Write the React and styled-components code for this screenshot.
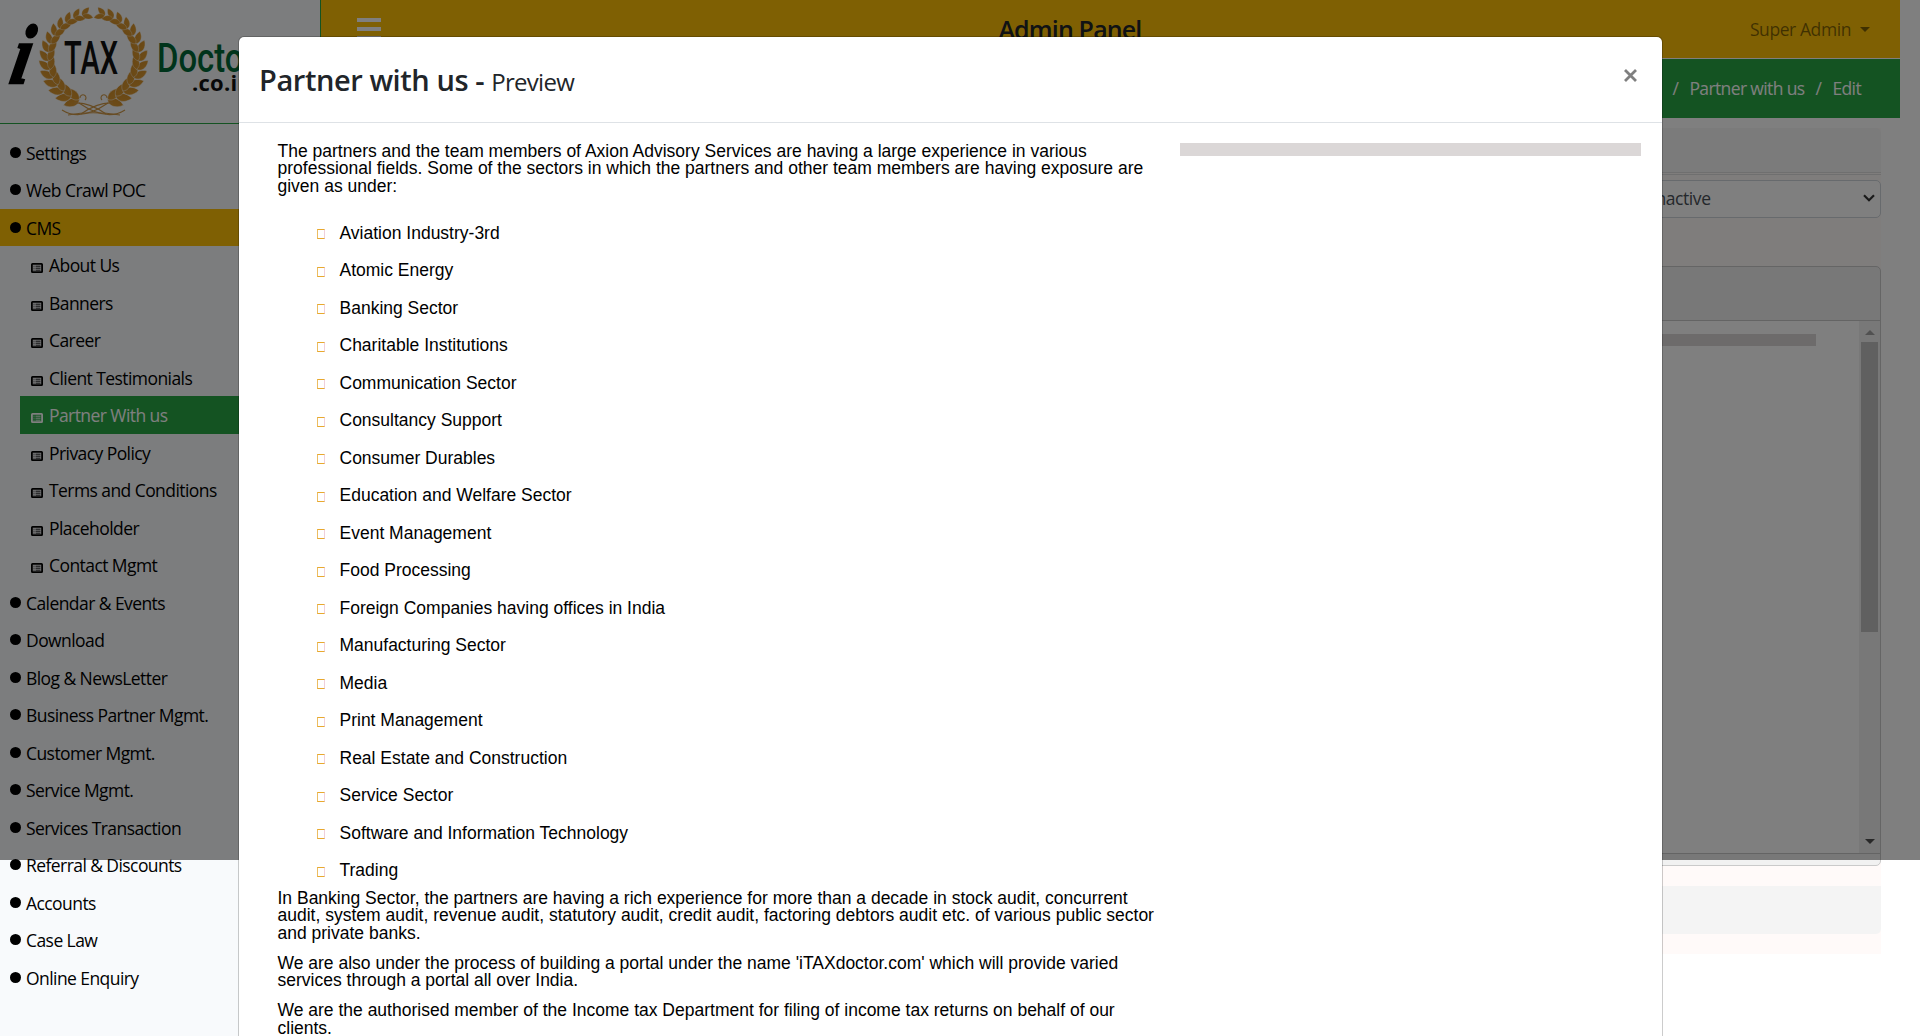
import React from "react";
import styled, { createGlobalStyle } from "styled-components";

const ui = `"Open Sans", "Noto Sans", sans-serif`;

const GlobalStyle = createGlobalStyle`
  *, *::before, *::after { box-sizing: border-box; }
  body { margin: 0; background: #fff; font-family: ${ui}; overflow: hidden; }
  p, ul, h1, h2 { margin: 0; padding: 0; }
`;

const Page = styled.div`
  position: relative;
  display: flex;
  width: 1920px;
  height: 1036px;
  overflow: hidden;
`;

/* ---------- sidebar ---------- */
const Sidebar = styled.aside`
  flex: none;
  width: 321px;
  background: #f8fafc;
  border-right: 1px solid #28a745;
`;

const Brand = styled.div`
  height: 124px;
  border-bottom: 1px solid #28a745;
  svg { display: block; }
`;

const Menu = styled.ul`
  list-style: none;
  padding-top: 9.75px;
`;

const MenuItem = styled.li`
  display: flex;
  align-items: center;
  height: 37.5px;
  padding: 0 0 0 10px;
  gap: 5px;
  font-size: 17.5px;
  letter-spacing: -0.57px;
  white-space: nowrap;
  color: #000;
  background: ${(p) => (p.$active ? "#ffc107" : "transparent")};
`;

const Dot = styled.span`
  width: 11px;
  height: 11px;
  margin-top: -1px;
  border-radius: 50%;
  background: #000;
`;

const SubItem = styled(MenuItem)`
  margin-left: 20px;
  padding: 0 0 0 11px;
  gap: 6px;
  color: ${(p) => (p.$current ? "#fff" : "#000")};
  background: ${(p) => (p.$current ? "#28a745" : "transparent")};
  svg { margin-top: 6px; flex: none; }
`;

/* ---------- main column ---------- */
const Main = styled.main`
  flex: none;
  width: 1579px;
  display: flex;
  flex-direction: column;
`;

const TopBar = styled.header`
  display: flex;
  justify-content: space-between;
  height: 58px;
  padding: 0 30px 0 36px;
  background: #ffc107;
`;

const Burger = styled.div`
  display: flex;
  flex-direction: column;
  gap: 5px;
  width: 24px;
  padding-top: 18px;
  span { height: 4px; background: #fff; }
`;

const PanelTitle = styled.h1`
  margin-left: 9px;
  padding-top: 12px;
  font-size: 25px;
  line-height: 34px;
  font-weight: 600;
  letter-spacing: -0.85px;
  color: #212529;
`;

const UserMenu = styled.div`
  display: flex;
  align-items: center;
  gap: 9px;
  font-size: 17.5px;
  letter-spacing: -0.42px;
  color: rgba(0, 0, 0, 0.5);
`;

const Caret = styled.span`
  border: 5.5px solid transparent;
  border-top-color: currentColor;
  border-bottom: 0;
`;

const Crumbs = styled.nav`
  display: flex;
  justify-content: flex-end;
  align-items: center;
  gap: 11px;
  height: 59px;
  margin-top: 1px;
  padding: 0 39px 1px 0;
  background: #28a745;
  color: #fff;
  font-size: 17.5px;
  letter-spacing: -0.62px;
`;

const Card = styled.section`
  display: flow-root;
  width: 1560px;
  margin-top: 10px;
  background: #fffaf9;
`;

const CardHead = styled.div`
  height: 45px;
  background: #f7f7f7;
  border-bottom: 1px solid #dfdfdf;
  border-radius: 5px 5px 0 0;
`;

const StatusRow = styled.div`
  display: flex;
  justify-content: flex-end;
  height: 92px;
  margin-top: 1px;
  padding-top: 5px;
  border-top: 1px solid #dfdfdf;
`;

const Select = styled.div`
  display: flex;
  justify-content: space-between;
  align-items: center;
  width: 240px;
  height: 38px;
  padding: 0 5px 2px 9px;
  border: 1px solid #ced4da;
  border-radius: 5px;
  background: #fff;
  color: #495057;
  font-size: 17.5px;
  letter-spacing: -0.42px;
`;

const Editor = styled.div`
  height: 600px;
  border: 1px solid #cacaca;
  border-radius: 5px;
  background: #f1f1f1;
  overflow: hidden;
`;

const Toolbar = styled.div`
  height: 54px;
  border-bottom: 1px solid #c8c8c8;
`;

const EditArea = styled.div`
  display: flex;
  justify-content: flex-end;
  height: 533px;
  background: #fff;
  border-bottom: 1px solid #c8c8c8;
`;

const Placeholder = styled.div`
  width: ${(p) => p.$w}px;
  height: ${(p) => p.$h}px;
  margin: ${(p) => p.$m || 0};
  background: #dbd7d7;
`;

const ScrollTrack = styled.div`
  display: flex;
  flex-direction: column;
  align-items: center;
  width: 21px;
  height: 532px;
  padding: 9px 0 9px;
  background: #f1f1f1;
`;

const Arrow = styled.span`
  border: 5px solid transparent;
  ${(p) =>
    p.$up
      ? "border-bottom-color:#a3a3a3;border-top:0;"
      : "border-top-color:#505050;border-bottom:0;margin-top:auto;"}
`;

const Thumb = styled.div`
  width: 17px;
  height: 290px;
  margin-top: 7px;
  background: #c1c1c1;
`;

const Footer = styled.div`
  height: 48px;
  margin: 20px 0;
  background: #f4f4f4;
  border-radius: 0 0 5px 5px;
`;

/* ---------- dialog ---------- */
const Backdrop = styled.div`
  position: absolute;
  inset: 0 0 auto 0;
  height: 860px;
  background: rgba(0, 0, 0, 0.5);
`;

const Modal = styled.div`
  position: absolute;
  left: 238px;
  top: 36px;
  width: 1425px;
  height: 1100px;
  border: 1px solid rgba(0, 0, 0, 0.2);
  border-radius: 6px;
  background: #fff;
  background-clip: padding-box;
`;

const ModalHead = styled.div`
  display: flex;
  justify-content: space-between;
  height: 86px;
  padding: 20px 25px 0 20px;
  border-bottom: 1px solid #dee2e6;
  svg { margin-top: 12px; }
`;

const ModalTitle = styled.h2`
  font-size: 29px;
  line-height: 45px;
  font-weight: 600;
  letter-spacing: -0.43px;
  color: #212529;
  small { font-size: 24px; font-weight: 400; letter-spacing: -0.7px; }
`;

const ModalBody = styled.div`
  display: flex;
  justify-content: space-between;
  padding: 19.5px 21px 0 38.5px;
  font-family: "Liberation Sans", Arial, sans-serif;
  font-size: 17.5px;
  line-height: 17.5px;
  color: #000;
`;

const Copy = styled.div`
  width: 885px;
  p { margin-bottom: 12.5px; }
`;

const Sectors = styled.ul`
  list-style: none;
  margin: 19.5px 0 0.3px;
  padding-left: 39.5px;
`;

const Sector = styled.li`
  display: flex;
  align-items: center;
  gap: 14.5px;
  height: 37.5px;
  &::before {
    content: "";
    width: 8px;
    height: 10px;
    margin-top: 2px;
    border: 1px solid #e8a92e;
    border-right-color: #f0cfdc;
    border-left-color: #ecbd62;
  }
`;

const leafCount = 14;

function Branch({ flip }) {
  const leaves = [];
  for (let i = 0; i < leafCount; i++) {
    const a = ((108 + (i * 148) / (leafCount - 1)) * Math.PI) / 180;
    const x = 93 + 44 * Math.cos(a);
    const y = 58 + 43.5 * Math.sin(a);
    const dir = (Math.atan2(44 * Math.cos(a), -44 * Math.sin(a)) * 180) / Math.PI;
    const s = 1.3 - i * 0.035;
    [-38, 24].forEach((off) =>
      leaves.push(
        <path
          key={i + "_" + off}
          d="M0 0C2 -4.4 8 -5 13 0C8 3.8 3 3.6 0 0Z"
          transform={`translate(${x} ${y}) rotate(${dir + off}) scale(${s})`}
        />
      )
    );
  }
  return (
    <g transform={flip ? "translate(187 0) scale(-1 1)" : undefined} fill="url(#gold)" stroke="#f8fafc" strokeWidth="0.35">
      {leaves}
    </g>
  );
}

function Logo() {
  return (
    <svg width="320" height="123" viewBox="0 0 320 123">
      <defs>
        <linearGradient id="gold" gradientUnits="userSpaceOnUse" x1="0" y1="-10" x2="0" y2="14">
          <stop offset="0" stopColor="#e0a038" />
          <stop offset="1" stopColor="#c8821f" />
        </linearGradient>
      </defs>
      <text x="0" y="0" fontFamily="Liberation Serif, serif" fontSize="84" fontWeight="700" fontStyle="italic" stroke="#000" strokeWidth="2.5" transform="translate(8 83) skewX(-11) scale(0.82 1)">i</text>
      <Branch />
      <Branch flip />
      <g fill="none" stroke="#cf9848" strokeWidth="1.1">
        <path d="M62 110C76 119 92 114 108 103" />
        <path d="M125 110C111 119 95 114 79 103" />
        <path d="M68 115C84 112 102 112 120 115" />
        <path d="M74 103C84 102 96 107 106 114M113 103C103 102 91 107 81 114" />
        <path d="M80 98a3 3 0 1 1 5 2M107 98a3 3 0 1 0 -5 2" />
      </g>
      <text x="64" y="74" fontFamily="Roboto, sans-serif" fontSize="46" fontWeight="500" fill="#111" textLength="54" lengthAdjust="spacingAndGlyphs">TAX</text>
      <text x="157" y="72" fontFamily="Roboto, sans-serif" fontSize="41" fontWeight="500" fill="#006837" textLength="98" lengthAdjust="spacingAndGlyphs">Doctor</text>
      <text x="192" y="91" fontFamily="Open Sans, sans-serif" fontSize="22" fontWeight="700" fill="#111" textLength="60">.co.in</text>
    </svg>
  );
}

const ListIcon = () => (
  <svg width="12" height="10" viewBox="0 0 12 10" fill="none" stroke="currentColor">
    <rect x="0.9" y="0.9" width="10.2" height="8.2" rx="0.6" strokeWidth="1.8" />
    <path d="M2.5 3.2h1M4.5 3.2h5M2.5 5.2h1M4.5 5.2h5M2.5 7.2h1M4.5 7.2h5" strokeWidth="0.9" />
  </svg>
);

const cmsPages = ["About Us", "Banners", "Career", "Client Testimonials", "Partner With us", "Privacy Policy", "Terms and Conditions", "Placeholder", "Contact Mgmt"];
const sections = ["Calendar & Events", "Download", "Blog & NewsLetter", "Business Partner Mgmt.", "Customer Mgmt.", "Service Mgmt.", "Services Transaction", "Referral & Discounts", "Accounts", "Case Law", "Online Enquiry"];
const sectors = ["Aviation Industry-3rd", "Atomic Energy", "Banking Sector", "Charitable Institutions", "Communication Sector", "Consultancy Support", "Consumer Durables", "Education and Welfare Sector", "Event Management", "Food Processing", "Foreign Companies having offices in India", "Manufacturing Sector", "Media", "Print Management", "Real Estate and Construction", "Service Sector", "Software and Information Technology", "Trading"];

const TopItem = ({ label, active }) => (
  <MenuItem $active={active}>
    <Dot />
    {label}
  </MenuItem>
);

export default function App() {
  return (
    <>
      <GlobalStyle />
      <Page>
        <Sidebar>
          <Brand><Logo /></Brand>
          <Menu>
            <TopItem label="Settings" />
            <TopItem label="Web Crawl POC" />
            <TopItem label="CMS" active />
            {cmsPages.map((t) => (
              <SubItem key={t} $current={t === "Partner With us"}>
                <ListIcon />
                {t}
              </SubItem>
            ))}
            {sections.map((t) => <TopItem key={t} label={t} />)}
          </Menu>
        </Sidebar>
        <Main>
          <TopBar>
            <Burger><span /><span /><span /></Burger>
            <PanelTitle>Admin Panel</PanelTitle>
            <UserMenu>Super Admin <Caret /></UserMenu>
          </TopBar>
          <Crumbs>
            <span>CMS</span><span>/</span><span>Partner with us</span><span>/</span><span>Edit</span>
          </Crumbs>
          <Card>
            <CardHead />
            <StatusRow>
              <Select>
                Inactive
                <svg width="12" height="8" viewBox="0 0 12 8" fill="none" stroke="#343434" strokeWidth="2.2">
                  <path d="M1 1.2L6 6.2L11 1.2" />
                </svg>
              </Select>
            </StatusRow>
            <Editor>
              <Toolbar />
              <EditArea>
                <Placeholder $w={400} $h={12} $m="13px 43px 0 0" />
                <ScrollTrack>
                  <Arrow $up />
                  <Thumb />
                  <Arrow />
                </ScrollTrack>
              </EditArea>
            </Editor>
            <Footer />
          </Card>
        </Main>
        <Backdrop />
        <Modal>
          <ModalHead>
            <ModalTitle>Partner with us - <small>Preview</small></ModalTitle>
            <svg width="13" height="13" viewBox="0 0 13 13" stroke="#7f7f7f" strokeWidth="2.8">
              <path d="M1 1L12 12M12 1L1 12" />
            </svg>
          </ModalHead>
          <ModalBody>
            <Copy>
              <p>The partners and the team members of Axion Advisory Services are having a large experience in various professional fields. Some of the sectors in which the partners and other team members are having exposure are given as under:</p>
              <Sectors>
                {sectors.map((s) => <Sector key={s}>{s}</Sector>)}
              </Sectors>
              <p>In Banking Sector, the partners are having a rich experience for more than a decade in stock audit, concurrent audit, system audit, revenue audit, statutory audit, credit audit, factoring debtors audit etc. of various public sector and private banks.</p>
              <p>We are also under the process of building a portal under the name 'iTAXdoctor.com' which will provide varied services through a portal all over India.</p>
              <p>We are the authorised member of the Income tax Department for filing of income tax returns on behalf of our clients.</p>
            </Copy>
            <Placeholder $w={461} $h={13} $m="0.5px 0 0 0" />
          </ModalBody>
        </Modal>
      </Page>
    </>
  );
}
